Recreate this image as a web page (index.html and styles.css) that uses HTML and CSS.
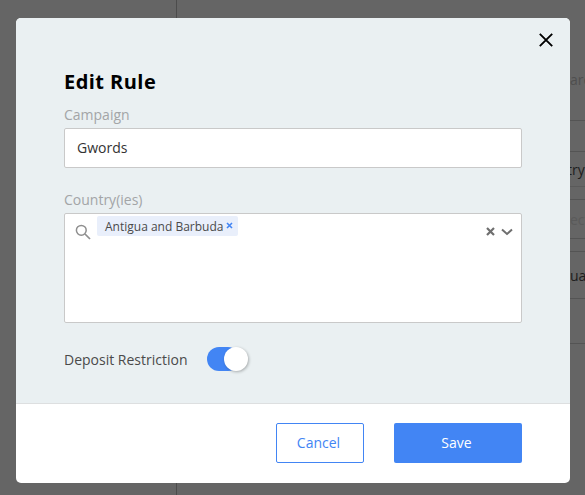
FILE: index.html
```html
<!DOCTYPE html>
<html lang="en">
<head>
<meta charset="utf-8">
<title>Edit Rule</title>
<link rel="stylesheet" href="styles.css">
</head>
<body>
<div class="page">
  <aside class="side"></aside>
  <main class="table">
    <div class="cell c1"><span class="muted">are</span></div>
    <div class="cell c2"></div>
    <div class="cell c3"><span>try</span></div>
    <div class="cell c4"></div>
    <div class="cell c5"><span class="faint">ect</span></div>
    <div class="cell c6"></div>
    <div class="cell c7"><span>ua</span></div>
    <div class="cell c8"></div>
  </main>
</div>
<div class="overlay">
  <section class="modal">
    <div class="body">
      <button class="close" aria-label="Close">
        <svg width="14" height="14" viewBox="0 0 14 14"><path d="M.8.8l12.4 12.4M13.2.8L.8 13.2" stroke="#000" stroke-width="1.9" fill="none"/></svg>
      </button>
      <h1 class="title">Edit Rule</h1>
      <label class="label">Campaign</label>
      <div class="input">Gwords</div>
      <label class="label second">Country(ies)</label>
      <div class="multi">
        <svg class="search" width="16" height="16" viewBox="0 0 16 16"><circle cx="6.3" cy="6.3" r="4.9" stroke="#8f8f8f" stroke-width="1.5" fill="none"/><path d="M10 10l5 5" stroke="#8f8f8f" stroke-width="1.7" fill="none"/></svg>
        <span class="chip">Antigua and Barbuda<svg class="chip-x" width="7" height="7" viewBox="0 0 7 7"><path d="M1 1l5 5M6 1L1 6" stroke="#4285f4" stroke-width="1.6" fill="none"/></svg></span>
        <span class="controls">
          <svg width="9" height="9" viewBox="0 0 9 9"><path d="M1 1l7 7M8 1L1 8" stroke="#6f6f6f" stroke-width="2.2" fill="none"/></svg>
          <svg width="12" height="8" viewBox="0 0 12 8"><path d="M1 1.5l5 4.5 5-4.5" stroke="#6f6f6f" stroke-width="2" fill="none"/></svg>
        </span>
      </div>
      <div class="toggle-row">
        <span class="toggle-label">Deposit Restriction</span>
        <span class="toggle"><span class="knob"></span></span>
      </div>
    </div>
    <footer class="footer">
      <button class="btn cancel">Cancel</button>
      <button class="btn save">Save</button>
    </footer>
  </section>
</div>
</body>
</html>
```
FILE: styles.css
```css
* { box-sizing: border-box; }
html, body { margin: 0; height: 100%; overflow: hidden; }
body { font-family: "Open Sans", sans-serif; background: #656565; }
.page { display: flex; height: 495px; width: 585px; }
.side { width: 177px; flex: none; border-right: 1px solid #4c4c4c; }
.table { flex: 1; overflow: hidden; display: flex; flex-direction: column; padding-top: 59px; }
.cell { display: flex; align-items: center; padding-left: 393px; font-size: 14px; white-space: nowrap; border-bottom: 1px solid #545454; color: #1d1d1d; }
.muted { color: #4f4f4f; }
.faint { color: #5a5a5a; }
.c1 { height: 62px; padding-bottom: 20px; }
.c2 { height: 31px; }
.c3 { height: 35px; padding-left: 390px; border-bottom-color: #5a5a5a; }
.c4 { height: 13px; }
.c5 { height: 39px; }
.c6 { height: 13px; }
.c7 { height: 47px; }
.c8 { height: 45px; }
.overlay { position: fixed; inset: 0; display: flex; align-items: flex-start; justify-content: flex-start; padding: 18px 0 0 16px; }
.modal { width: 554px; height: 465px; border-radius: 5px; overflow: hidden; background: #fff; display: flex; flex-direction: column; }
.body { position: relative; height: 386px; flex: none; background: #eaf0f2; padding: 50px 48px 0; border-bottom: 1px solid #dddfe0; }
.close { position: absolute; top: 15px; right: 17px; padding: 0; border: 0; background: none; display: flex; }
.title { margin: 0; font-size: 20px; line-height: 28px; font-weight: 700; color: #000; letter-spacing: .45px; }
.label { display: block; font-size: 14px; line-height: 22px; height: 24px; margin-top: 8px; margin-bottom: 0; color: #a3a5a7; }
.label.second { margin-top: 22px; margin-bottom: 0; height: 23px; line-height: 20px; }
.input { height: 40px; background: #fff; border: 1px solid #c9c9c9; border-radius: 2px; padding: 0 12px; font-size: 14px; line-height: 37px; color: #333; }
.multi { height: 110px; background: #fff; border: 1px solid #c9c9c9; border-radius: 2px; display: flex; align-items: flex-start; padding: 2px 0 0 10px; position: relative; }
.search { margin: 8px 6px 0 0; flex: none; }
.chip { display: flex; align-items: center; height: 20px; padding: 0 5px 0 8px; background: #e9effb; border-radius: 2px; font-size: 12px; color: #4a4a4a; }
.chip-x { margin-left: 3px; margin-top: -2px; }
.controls { margin-left: auto; margin-right: 8px; margin-top: 11px; display: flex; align-items: center; gap: 6px; }
.toggle-row { display: flex; align-items: center; margin-top: 24px; }
.toggle-label { font-size: 14px; color: #4a4a4a; width: 143px; }
.toggle { width: 33px; height: 24px; background: #4285f4; border-radius: 12px; position: relative; margin-right: 8px; }
.knob { position: absolute; left: 17px; top: 0; width: 24px; height: 24px; border-radius: 50%; background: #fff; box-shadow: 1px 1px 3px rgba(0,0,0,.28); }
.footer { flex: 1; display: flex; justify-content: flex-end; align-items: flex-start; padding: 19px 48px 0 0; gap: 30px; }
.btn { height: 40px; font-family: inherit; font-size: 14px; border-radius: 2px; padding: 0 3px 1px 0; }
.cancel { width: 88px; background: #fff; color: #4285f4; border: 1px solid #4285f4; }
.save { width: 128px; background: #4285f4; color: #fff; border: 0; }
```
